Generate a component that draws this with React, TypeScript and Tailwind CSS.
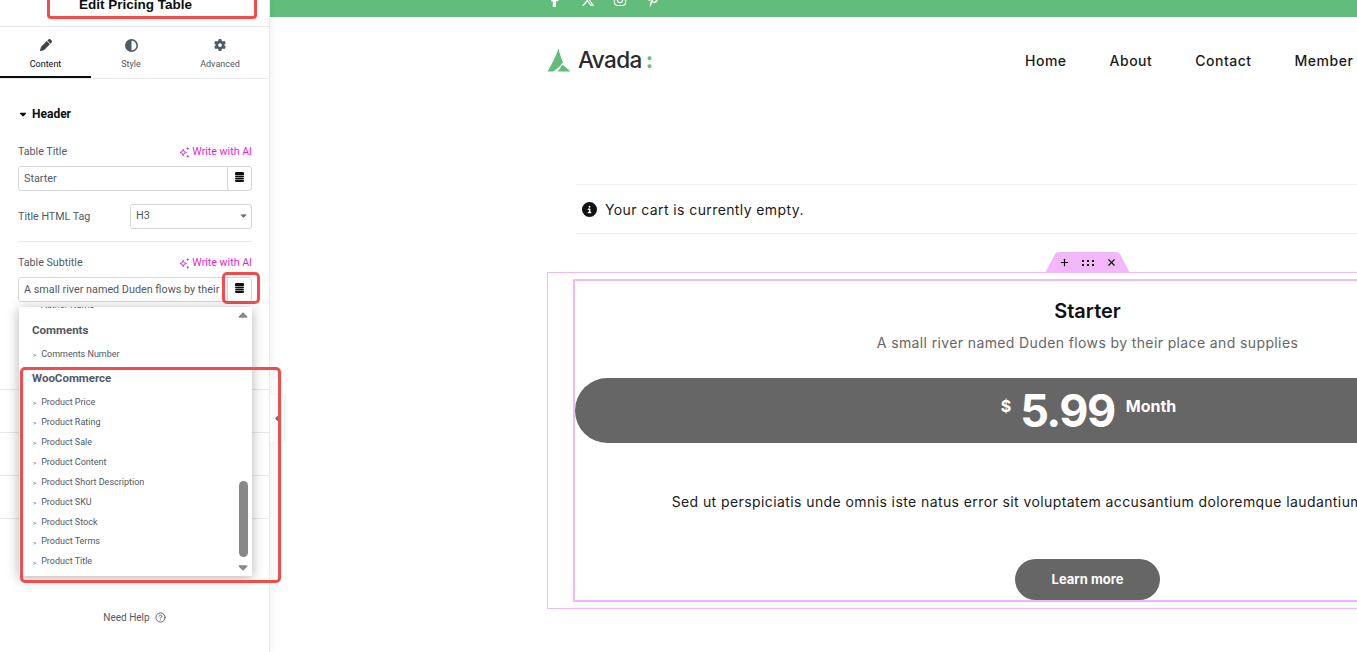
import React from "react";
import { FaFacebookF, FaInstagram, FaPinterestP, FaXTwitter, FaPen, FaCircleHalfStroke, FaGear, FaCircleInfo, FaCaretDown, FaCaretLeft, FaCaretUp } from "react-icons/fa6";
import { LuCircleHelp, LuPlus, LuX } from "react-icons/lu";

const wooItems = [
	"Product Price",
	"Product Rating",
	"Product Sale",
	"Product Content",
	"Product Short Description",
	"Product SKU",
	"Product Stock",
	"Product Terms",
	"Product Title",
];

function AiLink() {
	return (
		<span className="flex items-center gap-[2px] text-[10.65px] text-[#e31fd8]">
			<svg width="11" height="11" viewBox="0 0 12 12" fill="none" stroke="currentColor" strokeWidth="1">
				<path d="M4.5 2.5 L5.5 5 L8 6 L5.5 7 L4.5 9.5 L3.5 7 L1 6 L3.5 5 Z" />
				<path d="M9.5 .5 V3 M8.3 1.7 H10.7 M9.5 9 V11.5 M8.3 10.2 H10.7" />
			</svg>
			Write with AI
		</span>
	);
}

function DbButton() {
	return (
		<span className="flex h-full w-[24px] shrink-0 items-center justify-center border-l border-[#d5d8dc] pb-[3px] text-[#0c0d0e]">
			<svg width="9" height="10" viewBox="0 0 9 10" fill="currentColor">
				<path d="M1.5 0 H7.5 Q9 0 9 1.2 V2.6 Q9 3 8.6 3.2 H.4 Q0 3 0 2.6 V1.2 Q0 0 1.5 0 Z" />
				<rect x="0" y="3.8" width="9" height="1.6" rx=".8" />
				<rect x="0" y="6" width="9" height="1.6" rx=".8" />
				<path d="M.4 8.1 H8.6 Q9 8.3 9 8.8 Q9 10 7.5 10 H1.5 Q0 10 0 8.8 Q0 8.3 .4 8.1 Z" />
			</svg>
		</span>
	);
}

function Sidebar() {
	return (
		<aside className="relative z-10 flex h-[652px] w-[270px] shrink-0 flex-col border-r border-[#e9eaec] bg-white font-['Roboto',sans-serif] shadow-[2px_0_6px_rgba(0,0,0,0.05)]">
			<div className="h-[27px] shrink-0 overflow-hidden border-b border-[#e6e8ea]">
				<div className="ml-[47px] mt-[-10px] flex h-[29px] w-[210px] items-end justify-start rounded-[4px] border-[3px] border-[#f44c4c] pl-[29px] font-['Liberation_Sans',sans-serif] text-[13.5px] leading-[22px] font-bold text-[#0c0d0e]">
					Edit Pricing Table
				</div>
			</div>

			<div className="flex h-[52px] shrink-0 border-b border-[#e6e8ea] text-[9px]">
				<div className="flex w-[91px] flex-col items-center border-b-2 border-[#0c0d0e] pt-[12px] text-[#0c0d0e]">
					<FaPen size={12} className="text-[#3f444b]" />
					<span className="mt-[7px]">Content</span>
				</div>
				<div className="flex w-[80px] flex-col items-center pt-[12px] text-[#515962]">
					<FaCircleHalfStroke size={13} />
					<span className="mt-[6px]">Style</span>
				</div>
				<div className="flex w-[98px] flex-col items-center pt-[12px] text-[#515962]">
					<FaGear size={12} />
					<span className="mt-[7px]">Advanced</span>
				</div>
			</div>

			<div className="flex flex-col pl-[18px] pr-[17px]">
				<div className="mt-[26px] flex items-center gap-[4px] text-[12px] font-bold text-[#0c0d0e]">
					<FaCaretDown size={10} />
					Header
				</div>

				<div className="mt-[21px] flex items-center justify-between text-[10.7px] text-[#515962]">
					Table Title
					<AiLink />
				</div>
				<div className="mt-[6px] flex h-[25px] items-center rounded-[3px] border border-[#d5d8dc] pl-[5px] text-[10.8px] text-[#515962]">
					<span className="flex-1 pt-[1px]">Starter</span>
					<DbButton />
				</div>

				<div className="mt-[13px] flex items-center justify-between text-[10.7px] text-[#515962]">
					Title HTML Tag
					<span className="relative flex h-[25px] w-[122px] items-center rounded-[3px] border border-[#d5d8dc] pl-[5px] text-[10.8px]">
						H3
						<FaCaretDown size={9} className="absolute right-[3px] top-[6px] text-[#69727d]" />
					</span>
				</div>

				<div className="mt-[12px] h-px bg-[#e6e8ea]" />

				<div className="mt-[13px] flex items-center justify-between text-[10.7px] text-[#515962]">
					Table Subtitle
					<AiLink />
				</div>
				<div className="relative mt-[6px] flex h-[25px] items-center rounded-[3px] border border-[#d5d8dc] pl-[5px] text-[10.8px] text-[#515962]">
					<span className="flex-1 overflow-hidden whitespace-nowrap">A small river named Duden flows by their</span>
					<DbButton />
					<span className="absolute right-[-9px] top-[-6px] h-[32px] w-[38px] rounded-[5px] border-[3px] border-[#f44c4c]" />
				</div>
			</div>

			{/* rows hidden behind the dropdown */}
			<div className="mt-[87px] h-[43px] border-t border-[#e6e8ea]" />
			<div className="h-[43px] border-t border-[#e6e8ea]" />
			<div className="h-[43px] border-t border-[#e6e8ea]" />
			<div className="h-px bg-[#e6e8ea]" />

			<div className="mt-[91px] flex items-center justify-center gap-[5px] text-[10px] text-[#515962]">
				Need Help
				<LuCircleHelp size={11} />
			</div>

			{/* collapse handle */}
			<div className="absolute left-[270px] top-[395px] flex h-[47px] w-[14px] items-center rounded-r-[3px] bg-white pl-[3px] text-[#69727d] shadow-[2px_0_3px_rgba(0,0,0,0.06)]">
				<FaCaretLeft size={9} />
			</div>

			{/* dynamic tags dropdown */}
			<div className="absolute left-[19px] top-[307px] h-[269px] w-[233px] overflow-hidden bg-white text-[#515962] shadow-[0_2px_12px_rgba(0,0,0,0.3)]">
				<div className="absolute left-[22px] top-[-8px] text-[9px]">Author Name</div>
				<div className="absolute left-[13px] top-[15px] text-[11.5px] font-bold">Comments</div>
				<div className="absolute left-[14px] top-[41px] flex items-center gap-[5px] text-[9px]">
					<span className="text-[6px]">&gt;</span>Comments Number
				</div>
				<div className="absolute left-[13px] top-[63px] text-[11.5px] font-bold">WooCommerce</div>
				<div className="absolute left-[14px] top-[86px] flex flex-col">
					{wooItems.map((item) => (
						<div key={item} className="flex h-[19.9px] items-center gap-[5px] text-[9px]">
							<span className="text-[6px]">&gt;</span>
							{item}
						</div>
					))}
				</div>
				<FaCaretUp size={14} className="absolute right-[2px] top-[2px] text-[#888888]" />
				<div className="absolute right-[4px] top-[174px] h-[76px] w-[9px] rounded-full bg-[#888888]" />
				<FaCaretDown size={14} className="absolute bottom-[2px] right-[2px] text-[#888888]" />
			</div>
			<div className="absolute left-[20px] top-[367px] h-[216px] w-[261px] rounded-[5px] border-[3px] border-[#f44c4c]" />
		</aside>
	);
}

function Canvas() {
	return (
		<main className="h-[652px] flex-1 overflow-hidden bg-white font-['Inter',sans-serif]">
			<div className="flex h-[17px] items-end gap-[18.6px] overflow-hidden bg-[#62bd7d] pl-[278px] text-white">
				<FaFacebookF size={14} className="mb-[10px] shrink-0" />
				<FaXTwitter size={14} className="mb-[10px] shrink-0" />
				<FaInstagram size={14} className="mb-[10px] shrink-0" />
				<FaPinterestP size={14} className="mb-[10px] shrink-0" />
			</div>

			<div className="w-[1635px] pl-[277px]">
				<div className="flex h-[88px] items-center">
					<div className="flex w-[478px] shrink-0 items-center pb-[2px]">
						<svg width="24" height="24" viewBox="0 0 24 24" fill="#62bd7d" className="mb-[1px]">
							<path d="M11.5 0.5 C8.5 9 4.5 17 0.5 23.5 H6 C10 21 13.5 18 16 14.5 C14 10 12.5 5 11.5 0.5 Z" />
							<path d="M15.5 16.5 L23.5 23.5 H10.5 C12.5 21.5 14 19 15.5 16.5 Z" />
						</svg>
						<span className="ml-[7px] text-[22.5px] font-medium tracking-[-0.6px] text-[#2a2a2e]">Avada</span>
						<span className="ml-[4px] text-[22px] leading-none font-bold text-[#62bd7d]">:</span>
					</div>
					<nav className="flex gap-[43px] whitespace-nowrap pb-[2px] text-[14px] font-medium tracking-[0.5px] text-[#1a1a1a]">
						<span>Home</span>
						<span>About</span>
						<span>Contact</span>
						<span>Member</span>
					</nav>
				</div>

				<div className="ml-[29px] mt-[79px] flex h-[50px] w-[1000px] items-center gap-[8px] border-y border-[#f0f0f0] pl-[6px] text-[14px] tracking-[0.4px] text-[#1a1a1a]">
					<FaCircleInfo size={15} className="text-[#111111]" />
					Your cart is currently empty.
				</div>

				<div className="relative mt-[38px] ml-0 h-[337px] w-[1080px] border border-[#f3b8fb] pl-[25px] pt-[6px]">
					{/* section handle */}
					<div className="absolute left-[497px] top-[-21px] flex h-[21px] w-[85px] items-center justify-center gap-[12px] text-[#111111]">
						<svg className="absolute inset-0" width="85" height="21" viewBox="0 0 85 21" fill="#f3b8fb">
							<path d="M0 21 L10 2 Q11 0 14 0 H71 Q74 0 75 2 L85 21 Z" />
						</svg>
						<LuPlus size={11} strokeWidth={2.5} className="relative" />
						<svg className="relative" width="12" height="6" viewBox="0 0 12 6" fill="currentColor">
							<path d="M0 0h2v2H0zM5 0h2v2H5zM10 0h2v2h-2zM0 4h2v2H0zM5 4h2v2H5zM10 4h2v2h-2z" />
						</svg>
						<LuX size={11} strokeWidth={2.5} className="relative" />
					</div>

					<div className="flex h-[323px] w-[1029px] flex-col items-center border-2 border-[#f3b8fb]">
						<h3 className="mt-[16px] text-[20px] leading-[28px] font-semibold text-[#111111]">Starter</h3>
						<p className="mt-[6px] text-[14px] leading-[24px] tracking-[0.38px] text-[#666666]">
							A small river named Duden flows by their place and supplies
						</p>
						<div className="mt-[23px] flex h-[66px] w-full items-center justify-center rounded-l-[33px] bg-[#666666] pl-[2px] text-white">
							<span className="mb-[9px] mr-[9px] text-[16px] font-bold">$</span>
							<span className="mr-[11px] text-[45px] leading-none font-bold tracking-[-1.5px]">5.99</span>
							<span className="mb-[9px] text-[16px] font-bold">Month</span>
						</div>
						<p className="mt-[48px] whitespace-nowrap text-[14px] leading-[22px] tracking-[0.41px] text-[#1a1a1a]">
							Sed ut perspiciatis unde omnis iste natus error sit voluptatem accusantium doloremque laudantium, totam rem aperiam
						</p>
						<span className="mt-[46px] flex h-[41px] w-[145px] items-center justify-center rounded-full bg-[#666666] text-[13px] font-bold text-white">
							Learn more
						</span>
					</div>
				</div>
			</div>
		</main>
	);
}

export default function App() {
	return (
		<div className="flex h-[652px] w-[1357px] overflow-hidden">
			<Sidebar />
			<Canvas />
		</div>
	);
}
